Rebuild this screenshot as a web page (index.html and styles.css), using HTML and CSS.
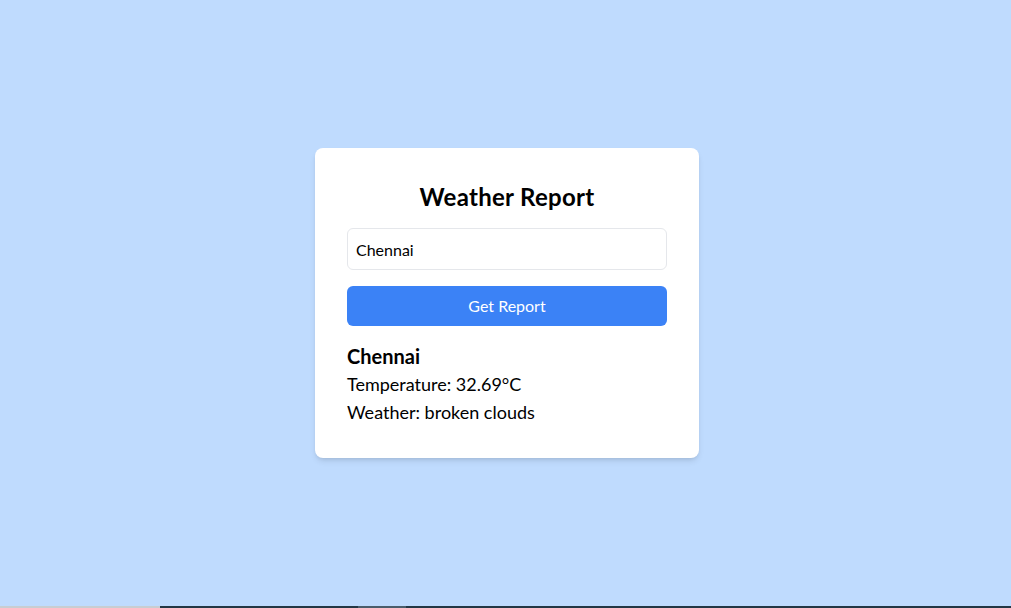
FILE: index.html
```html
<!DOCTYPE html>
<html lang="en">
<head>
<meta charset="utf-8">
<title>Weather Report</title>
<link rel="stylesheet" href="styles.css">
</head>
<body>
<main class="page">
  <section class="card">
    <h1 class="title">Weather Report</h1>
    <input class="city-input" type="text" value="Chennai">
    <button class="report-btn" type="button">Get Report</button>
    <div class="result">
      <h2 class="result-city">Chennai</h2>
      <p class="result-line">Temperature: 32.69°C</p>
      <p class="result-line">Weather: broken clouds</p>
    </div>
  </section>
</main>
<div class="taskbar">
  <span class="tb-light"></span><span class="tb-dark1"></span><span class="tb-mid"></span><span class="tb-dark2"></span>
</div>
</body>
</html>
```

FILE: styles.css
```css
* { box-sizing: border-box; }
html, body { margin: 0; padding: 0; }
body {
  background: #bfdbfe;
  font-family: "Lato", "Noto Sans", sans-serif;
  color: #000;
  height: 608px;
  overflow: hidden;
}
.page {
  height: 608px;
  display: flex;
  align-items: center;
  justify-content: center;
  padding-left: 3px;
  padding-bottom: 2px;
}
.card {
  width: 384px;
  background: #fff;
  border-radius: 8px;
  padding: 32px;
  box-shadow: 0 4px 6px -1px rgba(0,0,0,0.1), 0 2px 4px -2px rgba(0,0,0,0.1);
}
.title {
  margin: 0 0 16px;
  padding-top: 1px;
  height: 32px;
  font-size: 24px;
  line-height: 32px;
  font-weight: 700;
  letter-spacing: 0.3px;
  text-align: center;
}
.city-input {
  display: block;
  width: 100%;
  height: 42px;
  margin: 0 0 16px;
  padding: 8px;
  border: 1px solid #e5e7eb;
  border-radius: 6px;
  font-family: inherit;
  font-size: 16px;
  line-height: 24px;
  color: #000;
  outline: none;
}
.report-btn {
  display: block;
  width: 100%;
  height: 40px;
  padding: 8px;
  border: none;
  border-radius: 6px;
  background: #3b82f6;
  color: #fff;
  font-family: inherit;
  font-size: 16px;
  line-height: 24px;
}
.result { margin-top: 16px; }
.result-city {
  margin: 0;
  font-size: 20px;
  line-height: 28px;
  font-weight: 700;
}
.result-line {
  margin: 0;
  font-size: 18px;
  line-height: 28px;
}
.taskbar {
  position: fixed;
  left: 0;
  right: 0;
  bottom: 0;
  height: 2px;
  display: flex;
}
.tb-light { width: 160px; background: #c8cdd2; }
.tb-dark1 { width: 198px; background: #233745; }
.tb-mid { width: 48px; background: #4a5d6c; }
.tb-dark2 { flex: 1; background: #233745; }
```
